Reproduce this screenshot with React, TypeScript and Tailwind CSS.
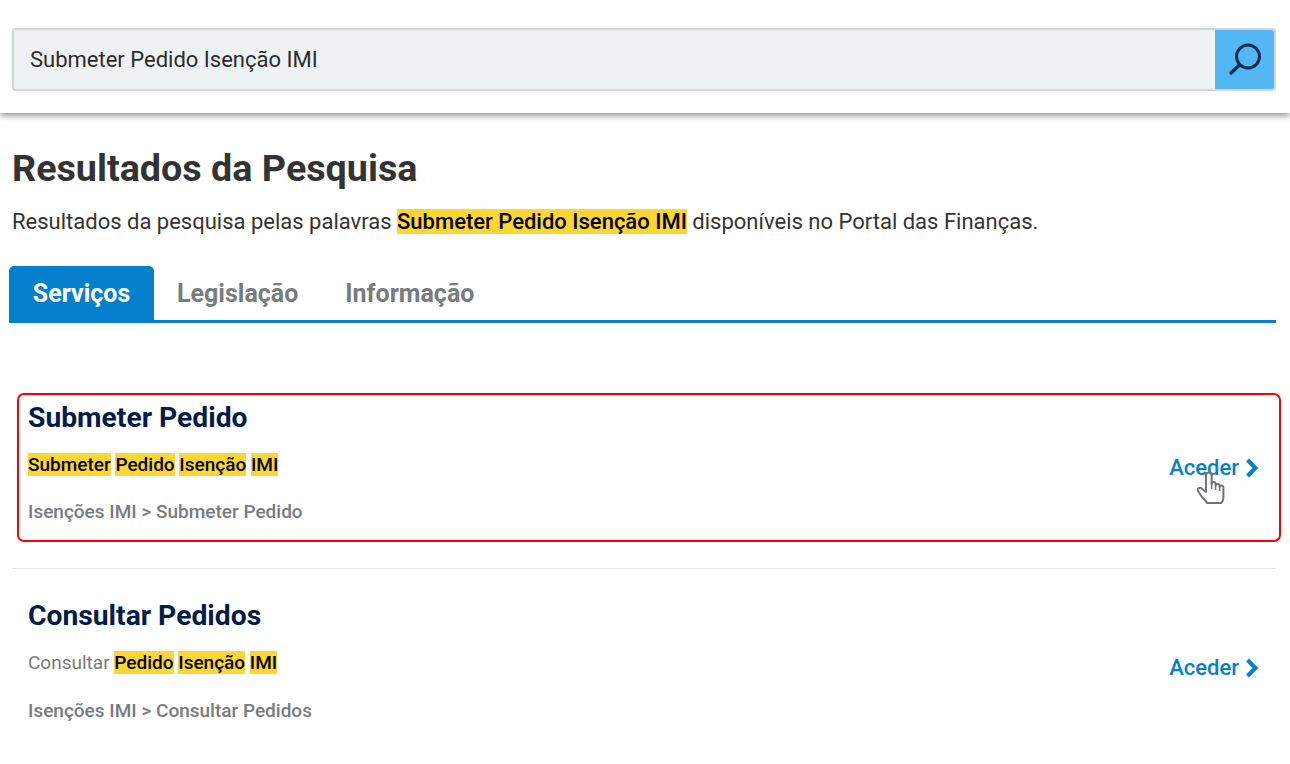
import React from "react";

const Mark = ({ children }: { children: React.ReactNode }) => (
  <mark className="bg-[#fcd733] text-black font-medium">{children}</mark>
);

function HandCursor() {
  return (
    <svg width="29" height="33" viewBox="0 0 29 33" className="absolute left-[28px] top-[17px]">
      <path
        d="M9 19V3.200a2.800 2.800 0 0 1 5.600 0V12a2 2 0 0 1 4 0v2a2 2 0 0 1 4 0v1a2 2 0 0 1 3.800 0V26c0 2-1 3.500-2 5H10c-1-2-3-4-5-6l-4-6c-1.500-2 1.500-4 3-3l5 4z"
        fill="#fff"
        stroke="#6f7376"
        strokeWidth="2"
        strokeLinejoin="round"
      />
      <path d="M14.600 12v5M18.600 14v4M22.600 15v4" stroke="#6f7376" strokeWidth="1.500" fill="none" />
    </svg>
  );
}

function Aceder({ cursor }: { cursor?: boolean }) {
  return (
    <a className="relative flex items-center text-[22px] leading-[26px] font-medium text-[#0580cc]">
      Aceder
      <svg width="14" height="20" viewBox="0 0 14 20" fill="none" stroke="#0580cc" strokeWidth="4" className="ml-[6px]">
        <path d="M2.500 2 10.500 10 2.500 18" />
      </svg>
      {cursor && <HandCursor />}
    </a>
  );
}

export default function App() {
  return (
    <div className="w-[1290px] h-[764px] overflow-hidden bg-white font-['Roboto',sans-serif] text-[#333]">
      {/* Search bar */}
      <div className="h-[113px] pt-[28px] pl-[12px] pr-[14px] shadow-[0_3px_6px_rgba(0,0,0,0.4)]">
        <div className="h-[63px] flex border-2 border-[#d3d6d8] rounded-[3px] bg-[#eff2f3]">
          <div className="flex-1 flex items-center pl-[16px] text-[22px] text-[#2c2c2c]">
            Submeter Pedido Isenção IMI
          </div>
          <div className="w-[59px] flex items-center justify-center bg-[#53b7f3] rounded-r-[2px]">
            <svg width="36" height="36" viewBox="0 0 36 36" fill="none" stroke="#0d2c52" strokeWidth="3" strokeLinecap="round">
              <circle cx="21" cy="14.500" r="11.500" />
              <path d="M12.500 23 4 31" strokeWidth="3.500" />
            </svg>
          </div>
        </div>
      </div>

      <h1 className="mt-[33px] ml-[12px] text-[37.700px] leading-[44px] font-bold text-[#333]">
        Resultados da Pesquisa
      </h1>
      <p className="mt-[17px] ml-[12px] text-[22px] leading-[30px] text-[#333]">
        Resultados da pesquisa pelas palavras{" "}
        <mark className="bg-[#fcd733] text-black font-medium">Submeter Pedido Isenção IMI</mark> disponíveis no Portal das Finanças.
      </p>

      {/* Tabs */}
      <div className="mt-[29px] ml-[9px] mr-[14px] h-[57px] flex border-b-[3px] border-[#0580cc] text-[25px] font-bold">
        <div className="w-[145px] flex items-center justify-center pt-[2px] bg-[#0580cc] text-white rounded-t-[5px]">Serviços</div>
        <div className="ml-[23px] flex items-center pt-[2px] text-[#777c7f]">Legislação</div>
        <div className="ml-[47px] flex items-center pt-[2px] text-[#777c7f]">Informação</div>
      </div>

      {/* Results */}
      <div className="mt-[70px] ml-[17px] mr-[9px] h-[149px] flex items-center justify-between border-2 border-[#ff0000] rounded-[7px] pl-[9px] pr-[20px]">
        <div className="self-start pt-[6px]">
          <h3 className="text-[28.250px] leading-[34px] font-bold text-[#021b49]">Submeter Pedido</h3>
          <p className="mt-[18px] text-[19px] leading-[24px]">
            <Mark>Submeter</Mark> <Mark>Pedido</Mark> <Mark>Isenção</Mark> <Mark>IMI</Mark>
          </p>
          <p className="mt-[23px] text-[19px] leading-[24px] font-medium text-[#777c7f]">Isenções IMI &gt; Submeter Pedido</p>
        </div>
        <Aceder cursor />
      </div>

      <div className="mt-[26px] ml-[12px] mr-[14px] h-[198px] border-t border-[#e6e8e9] flex items-center justify-between pl-[16px] pr-[17px]">
        <div className="self-start pt-[30px]">
          <h3 className="text-[28.250px] leading-[34px] font-bold text-[#021b49]">Consultar Pedidos</h3>
          <p className="mt-[18px] text-[19px] leading-[24px] text-[#777c7f]">
            Consultar <Mark>Pedido</Mark> <Mark>Isenção</Mark> <Mark>IMI</Mark>
          </p>
          <p className="mt-[24px] text-[19px] leading-[24px] font-medium text-[#777c7f]">Isenções IMI &gt; Consultar Pedidos</p>
        </div>
        <Aceder />
      </div>
    </div>
  );
}
